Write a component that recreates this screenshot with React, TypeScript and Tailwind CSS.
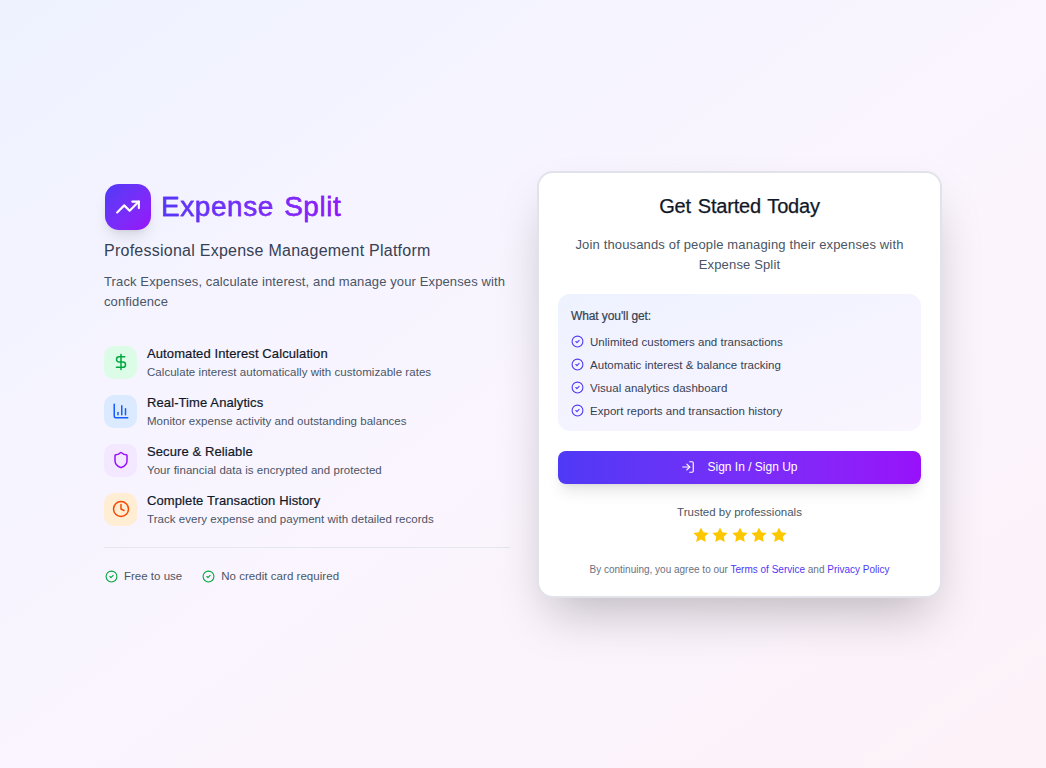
import { BarChart3, CircleCheck, Clock, DollarSign, LogIn, Shield, TrendingUp } from 'lucide-react'

const FEATURES = [
  {
    title: 'Automated Interest Calculation',
    text: 'Calculate interest automatically with customizable rates',
    icon: <DollarSign className="w-[18px] h-[18px] text-[#00a63e]" />,
    bg: 'bg-[#dcfce7]',
  },
  {
    title: 'Real-Time Analytics',
    text: 'Monitor expense activity and outstanding balances',
    icon: <BarChart3 className="w-[18px] h-[18px] text-[#155dfc]" />,
    bg: 'bg-[#dbeafe]',
  },
  {
    title: 'Secure & Reliable',
    text: 'Your financial data is encrypted and protected',
    icon: <Shield className="w-[18px] h-[18px] text-[#9810fa]" />,
    bg: 'bg-[#f3e8ff]',
  },
  {
    title: 'Complete Transaction History',
    text: 'Track every expense and payment with detailed records',
    icon: <Clock className="w-[18px] h-[18px] text-[#f54900]" />,
    bg: 'bg-[#ffedd4]',
  },
]

const PERKS = [
  'Unlimited customers and transactions',
  'Automatic interest & balance tracking',
  'Visual analytics dashboard',
  'Export reports and transaction history',
]

function StarIcon() {
  return (
    <svg viewBox="0 0 20 20" className="w-4 h-4 text-[#fdc700]" fill="currentColor">
      <polygon points="10,0.6 12.9,6.7 19.6,7.6 14.7,12.2 16,18.9 10,15.6 4,18.9 5.3,12.2 0.4,7.6 7.1,6.7" />
    </svg>
  )
}

export default function App() {
  return (
    <div className="min-h-screen flex items-center justify-center bg-gradient-to-br from-[#eef2ff] via-[#faf5ff] to-[#fdf2f8] font-['Liberation_Sans',sans-serif]">
      <div className="w-[838px] grid grid-cols-[406px_405px] gap-[27px] items-center">
        {/* Left column */}
        <div>
          <div className="flex items-center gap-[10px]">
            <div className="w-[46px] h-[46px] ml-px rounded-[14px] flex items-center justify-center bg-gradient-to-br from-[#4f39f6] to-[#9810fa] shadow-lg">
              <TrendingUp className="w-[26px] h-[26px] text-white" />
            </div>
            <h1 className="text-[28px] tracking-[0.55px] [word-spacing:2px] font-medium leading-9 bg-gradient-to-r from-[#4f39f6] to-[#9810fa] bg-clip-text text-transparent [-webkit-text-stroke:0.4px_#7326f8]">
              Expense Split
            </h1>
          </div>
          <p className="mt-[9px] text-base tracking-[0.25px] leading-6 text-[#364153]">
            Professional Expense Management Platform
          </p>
          <p className="mt-[9px] text-[13px] tracking-[0.12px] leading-5 text-[#4a5565]">
            Track Expenses, calculate interest, and manage your Expenses with confidence
          </p>

          <div className="mt-8 flex flex-col gap-[13px]">
            {FEATURES.map((f) => (
              <div key={f.title} className="flex items-center gap-[10px]">
                <div className={`w-[33px] h-[33px] rounded-[10px] flex items-center justify-center shrink-0 ${f.bg}`}>
                  {f.icon}
                </div>
                <div>
                  <h3 className="text-[13px] tracking-[0.1px] leading-5 font-medium text-[#101828] [-webkit-text-stroke:0.2px_#101828]">
                    {f.title}
                  </h3>
                  <p className="text-[11.5px] tracking-[0.04px] leading-4 text-[#4a5565]">{f.text}</p>
                </div>
              </div>
            ))}
          </div>

          <div className="mt-5 pt-5 border-t border-[#e5e7eb] flex items-center gap-5">
            <div className="flex items-center gap-[6px] pl-px text-[11.5px] leading-4 text-[#4a5565]">
              <CircleCheck className="w-[13px] h-[13px] text-[#00a63e]" />
              Free to use
            </div>
            <div className="flex items-center gap-[6px] text-[11.5px] tracking-[0.04px] leading-4 text-[#4a5565]">
              <CircleCheck className="w-[13px] h-[13px] text-[#00a63e]" />
              No credit card required
            </div>
          </div>
        </div>

        {/* Card */}
        <div className="bg-white rounded-2xl border-2 border-[#e2e3ea] shadow-2xl p-[19px]">
          <h2 className="text-xl tracking-[-0.2px] [word-spacing:1.5px] leading-7 font-medium text-[#101828] text-center [-webkit-text-stroke:0.25px_#101828]">
            Get Started Today
          </h2>
          <p className="mt-[15px] text-[13px] tracking-[0.15px] leading-5 text-[#4a5565] text-center px-2">
            Join thousands of people managing their expenses with Expense Split
          </p>

          <div className="mt-[19px] rounded-xl bg-gradient-to-br from-[#eef2ff] to-[#faf5ff] px-[13px] pt-[13px] pb-3">
            <h3 className="text-xs tracking-[-0.1px] leading-[19px] font-medium text-[#364153] [-webkit-text-stroke:0.2px_#364153]">
              What you'll get:
            </h3>
            <ul className="mt-2 flex flex-col gap-[7px]">
              {PERKS.map((p) => (
                <li key={p} className="flex items-center gap-[6px] text-[11.5px] tracking-[0.03px] leading-4 text-[#364153]">
                  <CircleCheck className="w-[13px] h-[13px] text-[#4f39f6]" />
                  {p}
                </li>
              ))}
            </ul>
          </div>

          <button
            type="button"
            className="mt-5 w-full h-[33px] rounded-lg flex items-center justify-center gap-3 text-xs text-white bg-gradient-to-r from-[#4f39f6] to-[#9810fa] shadow-lg"
          >
            <LogIn className="w-3.5 h-3.5" />
            Sign In / Sign Up
          </button>

          <div className="mt-5 text-center">
            <p className="text-[11.5px] leading-4 text-[#4a5565]">Trusted by professionals</p>
            <div className="mt-[7px] flex justify-center gap-[3.5px]">
              {[0, 1, 2, 3, 4].map((i) => (
                <StarIcon key={i} />
              ))}
            </div>
          </div>

          <p className="mt-5 text-center text-[10px] leading-[14px] text-[#6a7282]">
            By continuing, you agree to our <a className="text-[#4f39f6]">Terms of Service</a> and{' '}
            <a className="text-[#4f39f6]">Privacy Policy</a>
          </p>
        </div>
      </div>
    </div>
  )
}
